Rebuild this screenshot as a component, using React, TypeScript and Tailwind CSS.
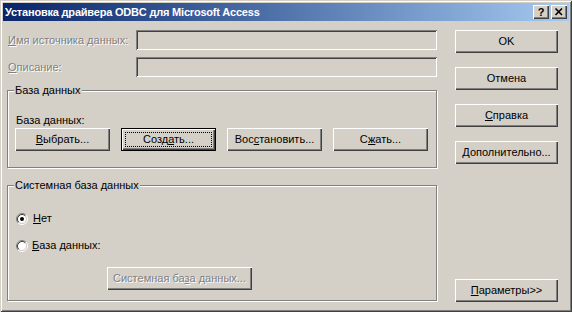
import React from "react";

const raised =
  "bg-[#d4d0c8] shadow-[inset_1px_1px_#ffffff,inset_-1px_-1px_#404040,inset_-2px_-2px_#808080]";
const sunken =
  "bg-[#d4d0c8] shadow-[inset_1px_1px_#808080,inset_-1px_-1px_#ffffff,inset_2px_2px_#404040,inset_-2px_-2px_#d4d0c8]";
const etched =
  "relative border border-[#808080] shadow-[inset_1px_1px_#ffffff,1px_1px_#ffffff]";
const disabledText = "text-[#808080] [text-shadow:1px_1px_#ffffff]";

const Button = ({
  children,
  className = "",
  disabled = false,
}: {
  children: React.ReactNode;
  className?: string;
  disabled?: boolean;
}) => (
  <div
    className={`${raised} flex items-center justify-center h-[23px] ${
      disabled ? disabledText : "text-black"
    } ${className}`}
  >
    {children}
  </div>
);

const Radio = ({ checked }: { checked: boolean }) => (
  <svg width="12" height="12" viewBox="0 0 12 12" className="shrink-0">
    <circle cx="6" cy="6" r="4" fill="#ffffff" />
    <path d="M2.11 9.89 A5.5 5.5 0 0 1 9.89 2.11" stroke="#808080" fill="none" />
    <path d="M9.89 2.11 A5.5 5.5 0 0 1 2.11 9.89" stroke="#ffffff" fill="none" />
    <path d="M2.82 9.18 A4.5 4.5 0 0 1 9.18 2.82" stroke="#404040" fill="none" />
    <path d="M9.18 2.82 A4.5 4.5 0 0 1 2.82 9.18" stroke="#d4d0c8" fill="none" />
    {checked && <circle cx="6" cy="6" r="2" fill="#000000" />}
  </svg>
);

const GroupCaption = ({ children }: { children: React.ReactNode }) => (
  <div className="absolute -top-[7px] left-[6px] px-[1px] bg-[#d4d0c8] leading-[13px]">
    {children}
  </div>
);

export default function App() {
  return (
    <div className="w-[572px] h-[312px] bg-[#d4d0c8] p-[3px] flex flex-col font-['Liberation_Sans',Arial,sans-serif] text-[11px] leading-[13px] shadow-[inset_1px_1px_#d4d0c8,inset_-1px_-1px_#404040,inset_2px_2px_#ffffff,inset_-2px_-2px_#808080]">
      {/* title bar */}
      <div className="h-[18px] flex items-center justify-between bg-gradient-to-r from-[#0a246a] to-[#a6caf0] pl-[2px] pr-[2px]">
        <span className="text-white font-bold text-[11px] leading-[13px] tracking-[-0.2px] whitespace-nowrap">
          Установка драйвера ODBC для Microsoft Access
        </span>
        <div className="flex gap-[2px]">
          <div className={`${raised} w-[16px] h-[14px] flex items-center justify-center font-bold text-black text-[11px]`}>
            ?
          </div>
          <div className={`${raised} w-[16px] h-[14px] flex items-center justify-center`}>
            <svg width="16" height="14" viewBox="0 0 16 14">
              <path d="M4.5 3.5 L11 10 M11 3.5 L4.5 10" stroke="#000" strokeWidth="1.6" />
            </svg>
          </div>
        </div>
      </div>

      <div className="flex flex-1">
        {/* left column */}
        <div className="ml-[4px] mt-[9px] w-[430px] flex flex-col">
          <div className="flex items-center h-[20px]">
            <span className={`w-[129px] pl-[1px] ${disabledText}`}>
              <u>И</u>мя источника данных:
            </span>
            <div className={`${sunken} flex-1 h-[20px]`} />
          </div>
          <div className="flex items-center h-[20px] mt-[7px]">
            <span className={`w-[129px] pl-[1px] ${disabledText}`}>
              <u>О</u>писание:
            </span>
            <div className={`${sunken} flex-1 h-[20px]`} />
          </div>

          <div className={`${etched} mt-[13px] h-[78px] pl-[7px] pt-[23px]`}>
            <GroupCaption>База данных</GroupCaption>
            <div className="ml-[1px]">База данных:</div>
            <div className="flex gap-[11px] mt-[1px]">
              <Button className="w-[95px]">
                <span>
                  <u>В</u>ыбрать...
                </span>
              </Button>
              <div className={`w-[95px] h-[23px] border border-black ${raised} p-[3px]`}>
                <div className="w-full h-full border border-dotted border-black flex items-center justify-center">
                  <span>
                    Созд<u>а</u>ть...
                  </span>
                </div>
              </div>
              <Button className="w-[95px]">
                <span>
                  Вос<u>с</u>тановить...
                </span>
              </Button>
              <Button className="w-[95px]">
                <span>
                  С<u>ж</u>ать...
                </span>
              </Button>
            </div>
          </div>

          <div className={`${etched} mt-[17px] h-[116px] pl-[8px] pt-[26px]`}>
            <GroupCaption>Системная база данных</GroupCaption>
            <div className="flex items-center gap-[5px] h-[13px]">
              <Radio checked />
              <span>
                <u>Н</u>ет
              </span>
            </div>
            <div className="flex items-center gap-[4px] h-[13px] mt-[14px]">
              <Radio checked={false} />
              <span>
                <u>Б</u>аза данных:
              </span>
            </div>
            <Button disabled className="w-[145px] ml-[91px] mt-[15px]">
              <span>
                Системная ба<u>з</u>а данных...
              </span>
            </Button>
          </div>
        </div>

        {/* right column */}
        <div className="ml-[18px] mt-[9px] w-[103px] flex flex-col gap-[14px] pb-[7px]">
          <Button>OK</Button>
          <Button>Отмена</Button>
          <Button>
            <span>
              <u>С</u>правка
            </span>
          </Button>
          <Button>
            <span>
              <u>Д</u>ополнительно...
            </span>
          </Button>
          <Button className="mt-auto">
            <span>
              <u>П</u>араметры&gt;&gt;
            </span>
          </Button>
        </div>
      </div>
    </div>
  );
}
